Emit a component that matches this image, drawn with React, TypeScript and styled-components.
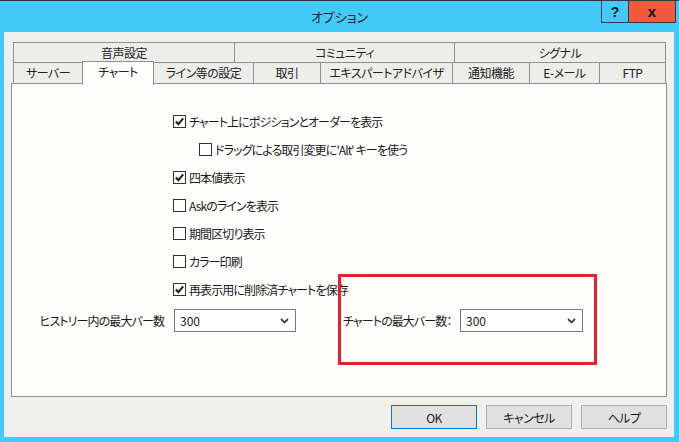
import React from 'react'
import styled, { createGlobalStyle } from 'styled-components'

const GlobalStyle = createGlobalStyle`
    html, body {
        margin: 0;
        padding: 0;
    }
    body {
        background: #42cbf9;
        font-family: "Noto Sans CJK JP", "Noto Sans", sans-serif;
        font-feature-settings: "palt";
        color: #1a1a1a;
    }
`

const Window = styled.div`
    width: 679px;
    height: 442px;
    box-sizing: border-box;
    border-top: 1px solid #333;
    background: #42cbf9;
    display: flex;
    flex-direction: column;
`

const TitleBar = styled.div`
    height: 31px;
    display: grid;
    grid-template-columns: 1fr auto 1fr;
    align-items: start;
`

const Caption = styled.div`
    grid-column: 2;
    font-size: 13px;
    line-height: 31px;
    color: #222;
`

const CaptionButtons = styled.div`
    grid-column: 3;
    justify-self: end;
    display: flex;
    margin-right: 3px;
    margin-top: -1px;
`

const CaptionButton = styled.div<{ $close?: boolean }>`
    width: ${(p) => (p.$close ? 47 : 28)}px;
    height: 23px;
    box-sizing: border-box;
    border: 1px solid #2d3a40;
    border-left-width: ${(p) => (p.$close ? 0 : 1)}px;
    background: ${(p) => (p.$close ? '#f05b3e' : '#42cbf9')};
    display: flex;
    align-items: center;
    justify-content: center;
    font-family: "Liberation Sans", sans-serif;
    font-weight: 700;
    font-size: ${(p) => (p.$close ? 15 : 14)}px;
    color: #111;
`

const Client = styled.div`
    margin: 0 5px 0 4px;
    height: 405px;
    background: #f0f0ec;
    box-sizing: border-box;
    padding: 10px 7px 0 7px;
    display: flex;
    flex-direction: column;
`

const TabStrip = styled.div`
    margin-left: 2px;
    display: flex;
    flex-direction: column;
`

const TabRow = styled.div`
    display: flex;
    align-items: flex-end;
`

const Tab = styled.div<{ $w: number; $h: number; $last?: boolean }>`
    width: ${(p) => p.$w}px;
    height: ${(p) => p.$h}px;
    box-sizing: border-box;
    border-top: 1px solid #8e8f95;
    border-left: 1px solid #8e8f95;
    border-right: ${(p) => (p.$last ? '1px solid #8e8f95' : 'none')};
    background: #ededea;
    font-size: 12px;
    letter-spacing: -0.5px;
    line-height: ${(p) => p.$h - 1}px;
    text-align: center;
    white-space: nowrap;
    color: #222;
`

const ActiveTab = styled.div<{ $w: number }>`
    position: relative;
    z-index: 1;
    width: ${(p) => p.$w + 1}px;
    height: 24px;
    margin-top: -2px;
    margin-bottom: -2px;
    margin-right: -1px;
    box-sizing: border-box;
    border: 1px solid #8e8f95;
    border-bottom: none;
    background: #fdfdfb;
    font-size: 12px;
    letter-spacing: -0.5px;
    line-height: 20px;
    text-align: center;
    white-space: nowrap;
    color: #222;
`

const Panel = styled.div`
    position: relative;
    width: 656px;
    height: 314px;
    box-sizing: border-box;
    border: 1px solid #8e8f95;
    background: #fdfdfb;
    padding-top: 23px;
`

const CheckList = styled.div`
    display: flex;
    flex-direction: column;
    padding-left: 161px;
`

const CheckRow = styled.div<{ $indent?: boolean }>`
    height: 28px;
    display: flex;
    align-items: center;
    gap: 3px;
    padding-left: ${(p) => (p.$indent ? 26 : 0)}px;
    font-size: 12px;
    letter-spacing: -0.9px;
    white-space: nowrap;
`

const Box = styled.span`
    width: 13px;
    height: 13px;
    box-sizing: border-box;
    border: 1px solid #333;
    background: #fff;
    display: inline-flex;
    align-items: center;
    justify-content: center;
    flex: none;
`

const SelectRow = styled.div`
    margin-top: 6px;
    display: flex;
    align-items: center;
    height: 23px;
`

const FieldLabel = styled.div<{ $w: number; $right?: boolean; $gap: number }>`
    width: ${(p) => p.$w}px;
    margin-right: ${(p) => p.$gap}px;
    text-align: ${(p) => (p.$right ? 'right' : 'left')};
    font-size: 12px;
    letter-spacing: -0.9px;
    white-space: nowrap;
    flex: none;
`

const Select = styled.div<{ $w: number }>`
    width: ${(p) => p.$w}px;
    height: 23px;
    box-sizing: border-box;
    border: 1px solid #7a7a7a;
    background: #fff;
    display: flex;
    align-items: center;
    justify-content: space-between;
    padding: 0 6px 0 5px;
    font-size: 12px;
    flex: none;
`

const Spacer = styled.div<{ $w: number }>`
    width: ${(p) => p.$w}px;
    flex: none;
`

const Highlight = styled.div`
    position: absolute;
    left: 326px;
    top: 190px;
    width: 259px;
    height: 91px;
    box-sizing: border-box;
    border: 3px solid #e8212b;
    pointer-events: none;
`

const ButtonBar = styled.div`
    margin-top: 8px;
    width: 656px;
    display: flex;
    justify-content: flex-end;
    gap: 9px;
`

const Button = styled.div<{ $default?: boolean }>`
    width: 86px;
    height: 24px;
    box-sizing: border-box;
    border: 1px solid ${(p) => (p.$default ? '#0078d7' : '#adadad')};
    background: #e1e1e1;
    display: flex;
    align-items: center;
    justify-content: center;
    font-size: 12px;
    letter-spacing: -0.5px;
    color: #1a1a1a;
`

function CheckBox({ checked }: { checked?: boolean }) {
    return (
        <Box>
            {checked && (
                <svg width="11" height="11" viewBox="0 0 11 11">
                    <path d="M1.8 5.6 L4.3 8.1 L9.2 2.4" fill="none" stroke="#1e1e1e" strokeWidth="2.1" />
                </svg>
            )}
        </Box>
    )
}

function Chevron() {
    return (
        <svg width="9" height="6" viewBox="0 0 9 6">
            <path d="M1 1 L4.5 4.5 L8 1" fill="none" stroke="#444" strokeWidth="1.8" />
        </svg>
    )
}

const topTabs = [
    { label: '音声設定', w: 221 },
    { label: 'コミュニティ', w: 220 },
    { label: 'シグナル', w: 212 },
]

const bottomTabs = [
    { label: 'サーバー', w: 69 },
    { label: 'チャート', w: 71, active: true },
    { label: 'ライン等の設定', w: 100 },
    { label: '取引', w: 67 },
    { label: 'エキスパートアドバイザ', w: 132 },
    { label: '通知機能', w: 77 },
    { label: 'E-メール', w: 70 },
    { label: 'FTP', w: 67 },
]

const checks = [
    { label: 'チャート上にポジションとオーダーを表示', checked: true },
    { label: "ドラッグによる取引変更に'Alt' キーを使う", indent: true },
    { label: '四本値表示', checked: true },
    { label: 'Askのラインを表示' },
    { label: '期間区切り表示' },
    { label: 'カラー印刷' },
    { label: '再表示用に削除済チャートを保存', checked: true },
]

export default function App() {
    return (
        <>
            <GlobalStyle />
            <Window>
                <TitleBar>
                    <Caption>オプション</Caption>
                    <CaptionButtons>
                        <CaptionButton>?</CaptionButton>
                        <CaptionButton $close>x</CaptionButton>
                    </CaptionButtons>
                </TitleBar>
                <Client>
                    <TabStrip>
                        <TabRow>
                            {topTabs.map((t, i) => (
                                <Tab key={t.label} $w={t.w} $h={20} $last={i === topTabs.length - 1}>
                                    {t.label}
                                </Tab>
                            ))}
                        </TabRow>
                        <TabRow>
                            {bottomTabs.map((t, i) =>
                                t.active ? (
                                    <ActiveTab key={t.label} $w={t.w}>
                                        {t.label}
                                    </ActiveTab>
                                ) : (
                                    <Tab key={t.label} $w={t.w} $h={21} $last={i === bottomTabs.length - 1}>
                                        {t.label}
                                    </Tab>
                                )
                            )}
                        </TabRow>
                    </TabStrip>
                    <Panel>
                        <CheckList>
                            {checks.map((c) => (
                                <CheckRow key={c.label} $indent={c.indent}>
                                    <CheckBox checked={c.checked} />
                                    {c.label}
                                </CheckRow>
                            ))}
                        </CheckList>
                        <SelectRow>
                            <FieldLabel $w={152} $right $gap={10}>
                                ヒストリー内の最大バー数
                            </FieldLabel>
                            <Select $w={122}>
                                300
                                <Chevron />
                            </Select>
                            <Spacer $w={47} />
                            <FieldLabel $w={117} $gap={0}>
                                チャートの最大バー数：
                            </FieldLabel>
                            <Select $w={123}>
                                300
                                <Chevron />
                            </Select>
                        </SelectRow>
                        <Highlight />
                    </Panel>
                    <ButtonBar>
                        <Button $default>OK</Button>
                        <Button>キャンセル</Button>
                        <Button>ヘルプ</Button>
                    </ButtonBar>
                </Client>
            </Window>
        </>
    )
}
